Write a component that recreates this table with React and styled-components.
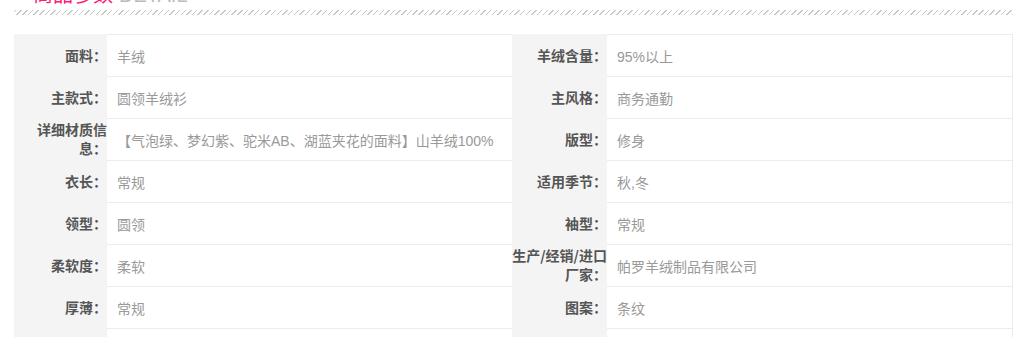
import React from 'react'
import styled, { createGlobalStyle } from 'styled-components'

const GlobalStyle = createGlobalStyle`
  body {
    margin: 0;
    background: #fff;
    font-family: "Liberation Sans", "Noto Sans CJK SC", sans-serif;
  }
`

const Section = styled.div`
  padding: 0 14px;
  overflow: hidden;
  height: 337px;
`

const Title = styled.div`
  display: flex;
  align-items: baseline;
  gap: 6px;
  margin-top: -16px;
  padding-left: 19px;
  height: 20px;
  line-height: 20px;
  font-size: 20px;
`

const TitleMain = styled.span`
  color: #ff1a75;
  font-family: "Noto Sans CJK SC", sans-serif;
`

const TitleSub = styled.span`
  color: #bbb;
  font-family: "Liberation Sans", sans-serif;
`

const Hatch = styled.div`
  margin-top: 6px;
  height: 5px;
  background: repeating-linear-gradient(
    -45deg,
    #c8c8c8 0 1px,
    transparent 1px 4px
  );
`

const Grid = styled.div`
  margin-top: 19px;
  display: grid;
  grid-template-columns: 93px 405px 95px 406px;
  grid-auto-rows: 42px;
`

const Label = styled.div`
  box-sizing: border-box;
  background: #f4f4f4;
  display: flex;
  align-items: center;
  justify-content: flex-end;
  text-align: right;
  white-space: nowrap;
  padding: 0;
  font-family: "Noto Sans CJK SC", sans-serif;
  font-size: 14px;
  font-weight: 700;
  line-height: 19px;
  color: #555;
`

const Value = styled.div`
  box-sizing: border-box;
  display: flex;
  align-items: center;
  padding-left: 10px;
  border-top: 1px solid #ececec;
  border-right: ${p => (p.$last ? '1px solid #ececec' : 'none')};
  font-size: 14px;
  color: #999;
  white-space: nowrap;
  overflow: hidden;
`

const rows = [
  [['面料'], '羊绒', ['羊绒含量'], '95%以上'],
  [['主款式'], '圆领羊绒衫', ['主风格'], '商务通勤'],
  [['详细材质信', '息'], '【气泡绿、梦幻紫、驼米AB、湖蓝夹花的面料】山羊绒100%', ['版型'], '修身'],
  [['衣长'], '常规', ['适用季节'], '秋,冬'],
  [['领型'], '圆领', ['袖型'], '常规'],
  [['柔软度'], '柔软', ['生产/经销/进口', '厂家'], '帕罗羊绒制品有限公司'],
  [['厚薄'], '常规', ['图案'], '条纹'],
  [null, '', null, ''],
]

function LabelText({ lines }) {
  if (!lines) return <Label />
  return (
    <Label>
      <div>
        {lines.map((l, i) => (
          <React.Fragment key={i}>
            {i > 0 && <br />}
            {l}
            {i === lines.length - 1 && '：'}
          </React.Fragment>
        ))}
      </div>
    </Label>
  )
}

export default function App() {
  return (
    <Section>
      <GlobalStyle />
      <Title>
        <TitleMain>商品参数</TitleMain>
        <TitleSub>DETAIL</TitleSub>
      </Title>
      <Hatch />
      <Grid>
        {rows.map((r, i) => (
          <React.Fragment key={i}>
            <LabelText lines={r[0]} />
            <Value>{r[1]}</Value>
            <LabelText lines={r[2]} />
            <Value $last>{r[3]}</Value>
          </React.Fragment>
        ))}
      </Grid>
    </Section>
  )
}
